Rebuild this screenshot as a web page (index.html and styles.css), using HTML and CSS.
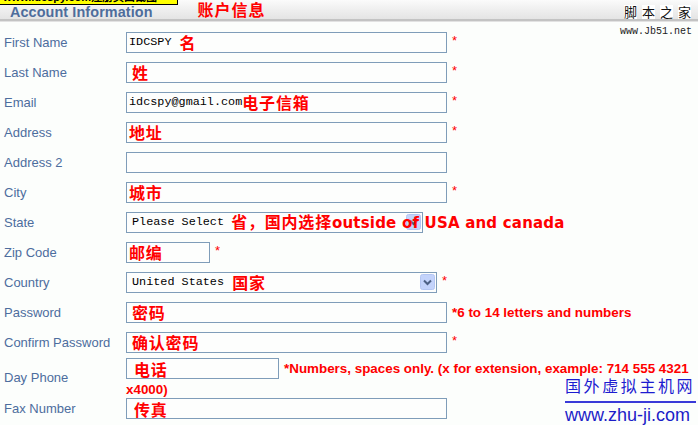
FILE: index.html
```html
<!DOCTYPE html>
<html lang="zh-CN">
<head>
<meta charset="utf-8">
<title>Account Information</title>
<link rel="stylesheet" href="styles.css">
</head>
<body>
<div class="page">
  <div class="topnote"><span>www.idcspy.com注册页面截图</span></div>

  <header class="head">
    <h1 class="title">Account Information</h1>
    <span class="head-note">账户信息</span>
  </header>

  <div class="jb51">
    <div class="jb51-cn"><span>脚</span><span>本</span><span>之</span><span>家</span></div>
    <div class="jb51-url">www.Jb51.net</div>
  </div>

  <form class="form">
    <div class="row">
      <div class="label">First Name</div>
      <div class="cell"><div class="field">IDCSPY <span class="cn gap">名</span></div><span class="req">*</span></div>
    </div>
    <div class="row">
      <div class="label">Last Name</div>
      <div class="cell"><div class="field"><span class="cn lead">姓</span></div><span class="req">*</span></div>
    </div>
    <div class="row">
      <div class="label">Email</div>
      <div class="cell"><div class="field">idcspy@gmail.com<span class="cn">电子信箱</span></div><span class="req">*</span></div>
    </div>
    <div class="row">
      <div class="label">Address</div>
      <div class="cell"><div class="field"><span class="cn">地址</span></div><span class="req">*</span></div>
    </div>
    <div class="row">
      <div class="label">Address 2</div>
      <div class="cell"><div class="field"></div></div>
    </div>
    <div class="row">
      <div class="label">City</div>
      <div class="cell"><div class="field"><span class="cn">城市</span></div><span class="req">*</span></div>
    </div>
    <div class="row">
      <div class="label">State</div>
      <div class="cell">
        <div class="field select state">Please Select <span class="cn over">省，国内选择<span class="en">outside of USA and canada</span></span>
          <span class="arrow"><svg width="15" height="16" viewBox="0 0 15 16"><rect x="0.5" y="0.5" width="14" height="15" rx="2" fill="#c3d3fb" stroke="#b4c6f2"/><path d="M4 6.5 L7.5 10 L11 6.5" fill="none" stroke="#4d6185" stroke-width="2"/></svg></span>
        </div>
      </div>
    </div>
    <div class="row">
      <div class="label">Zip Code</div>
      <div class="cell"><div class="field zip"><span class="cn">邮编</span></div><span class="req">*</span></div>
    </div>
    <div class="row">
      <div class="label">Country</div>
      <div class="cell">
        <div class="field select country">United States <span class="cn gap">国家</span>
          <span class="arrow"><svg width="15" height="16" viewBox="0 0 15 16"><rect x="0.5" y="0.5" width="14" height="15" rx="2" fill="#c3d3fb" stroke="#b4c6f2"/><path d="M4 6.5 L7.5 10 L11 6.5" fill="none" stroke="#4d6185" stroke-width="2"/></svg></span>
        </div>
        <span class="req">*</span>
      </div>
    </div>
    <div class="row">
      <div class="label">Password</div>
      <div class="cell"><div class="field"><span class="cn lead">密码</span></div><span class="note">*6 to 14 letters and numbers</span></div>
    </div>
    <div class="row">
      <div class="label">Confirm Password</div>
      <div class="cell"><div class="field"><span class="cn lead">确认密码</span></div><span class="req">*</span></div>
    </div>
    <div class="row phone">
      <div class="label">Day Phone</div>
      <div class="cell flow"><div class="field phone-field"><span class="cn lead2">电话</span></div><span class="note">*Numbers, spaces only. (x for extension, example: 714 555 4321 x4000)</span></div>
    </div>
    <div class="row fax">
      <div class="label">Fax Number</div>
      <div class="cell"><div class="field"><span class="cn lead2">传真</span></div></div>
    </div>
  </form>

  <div class="zhuji">
    <div class="zhuji-cn">国外虚拟主机网</div>
    <div class="zhuji-url">www.zhu-ji.com</div>
  </div>
</div>
</body>
</html>
```

FILE: styles.css
```css
html, body {
  margin: 0;
  padding: 0;
  background: #fcfefc;
}

.page {
  position: relative;
  width: 698px;
  height: 425px;
  overflow: hidden;
  font-family: "Liberation Sans", Arial, sans-serif;
  background: #fcfefc;
}

/* cut-off yellow banner at very top */
.topnote {
  position: absolute;
  left: 0;
  top: 0;
  width: 177px;
  height: 4px;
  background: #ffff00;
  border-right: 1px solid #000;
  border-bottom: 1px solid #000;
  overflow: hidden;
  z-index: 2;
}
.topnote span {
  display: block;
  margin-top: -9px;
  padding-left: 3px;
  font: bold 11px/12px "Liberation Sans", Arial, sans-serif;
  color: #000;
  white-space: nowrap;
}

/* header band */
.head {
  height: 19px;
  display: flex;
  align-items: flex-end;
  background: linear-gradient(#fbfbfb 0%, #efefef 50%, #e4e4e4 100%);
  border-bottom: 2px solid #c3c3c3;
  box-shadow: 0 1px 0 #e2e2e2;
}
.title {
  margin: 0 0 -2px 10px;
  font: bold 14.4px/18px "Liberation Sans", Arial, sans-serif;
  color: #4e6d9c;
  letter-spacing: 0.1px;
}
.head-note {
  margin-left: 45px;
  align-self: flex-start;
  padding-top: 1px;
  font: bold 16px/16px "Noto Sans CJK SC", sans-serif;
  letter-spacing: 1px;
  color: #ff0000;
}

/* jb51 watermark */
.jb51 {
  position: absolute;
  right: 7px;
  top: 5px;
  display: flex;
  flex-direction: column;
  align-items: flex-end;
}
.jb51-cn {
  display: flex;
  gap: 5px;
}
.jb51-cn span {
  background: #fff;
  font: 13px/14px "Noto Sans CJK SC", sans-serif;
  color: #111;
}
.jb51-url {
  margin-top: 8px;
  margin-right: -1px;
  font: 10px/10px "Liberation Mono", monospace;
  color: #222;
}

/* form */
.form {
  padding-top: 6px;
}
.row {
  display: flex;
  align-items: center;
  height: 30px;
}
.label {
  flex: none;
  width: 122px;
  padding-left: 4px;
  font-size: 13px;
  color: #4d6d9e;
  white-space: nowrap;
}
.cell {
  flex: 1;
  display: flex;
  align-items: center;
}

.field {
  box-sizing: border-box;
  flex: none;
  position: relative;
  width: 321px;
  height: 21px;
  border: 1px solid #7f9db9;
  background: #fdfefd;
  padding-left: 2px;
  display: flex;
  align-items: center;
  white-space: pre;
  font: 11.8px/14px "Liberation Mono", "Courier New", monospace;
  color: #000;
}
.field.zip { width: 84px; }
.field.select { padding-left: 5px; }
.field.state { width: 297px; }
.field.country { width: 311px; }
.field.phone-field { width: 153px; }

.cn {
  font: bold 16px/16px "Noto Sans CJK SC", sans-serif;
  letter-spacing: 0.8px;
  color: #ff0000;
}
.cn.lead { margin-left: 3px; }
.cn.lead2 { margin-left: 5px; }
.cn.gap { margin-left: 1px; }
.cn.over {
  position: relative;
  z-index: 1;
}
.en {
  font: bold 15px/16px "DejaVu Sans", Verdana, sans-serif;
  letter-spacing: 0.2px;
}

.arrow {
  position: absolute;
  right: 1px;
  top: 1px;
  width: 15px;
  height: 16px;
  line-height: 0;
}
.arrow svg { display: block; }

.req {
  margin-left: 5px;
  margin-top: -4px;
  font-size: 13px;
  color: #ff0000;
}
.note {
  margin-left: 5px;
  font: bold 13.4px/19px "Liberation Sans", Arial, sans-serif;
  color: #ff0000;
}

/* day phone row: text wraps under the input */
.row.phone {
  height: 41px;
}
.cell.flow {
  display: block;
  align-self: flex-start;
  padding-top: 1px;
  line-height: 19px;
}
.cell.flow .field {
  display: inline-flex;
  vertical-align: top;
}
.row.fax {
  height: 21px;
}

/* zhu-ji watermark */
.zhuji {
  position: absolute;
  left: 565px;
  top: 375px;
  width: 131px;
  z-index: 3;
}
.zhuji-cn {
  height: 20px;
  padding-bottom: 6px;
  border-bottom: 2px solid #3a3ad8;
  font: 16px/20px "Noto Sans CJK SC", sans-serif;
  letter-spacing: 2.6px;
  color: #1c1cd0;
  white-space: nowrap;
}
.zhuji-url {
  margin-top: 2px;
  font: 18px/20px "Liberation Sans", Arial, sans-serif;
  color: #1c1cc8;
  white-space: nowrap;
}
```
